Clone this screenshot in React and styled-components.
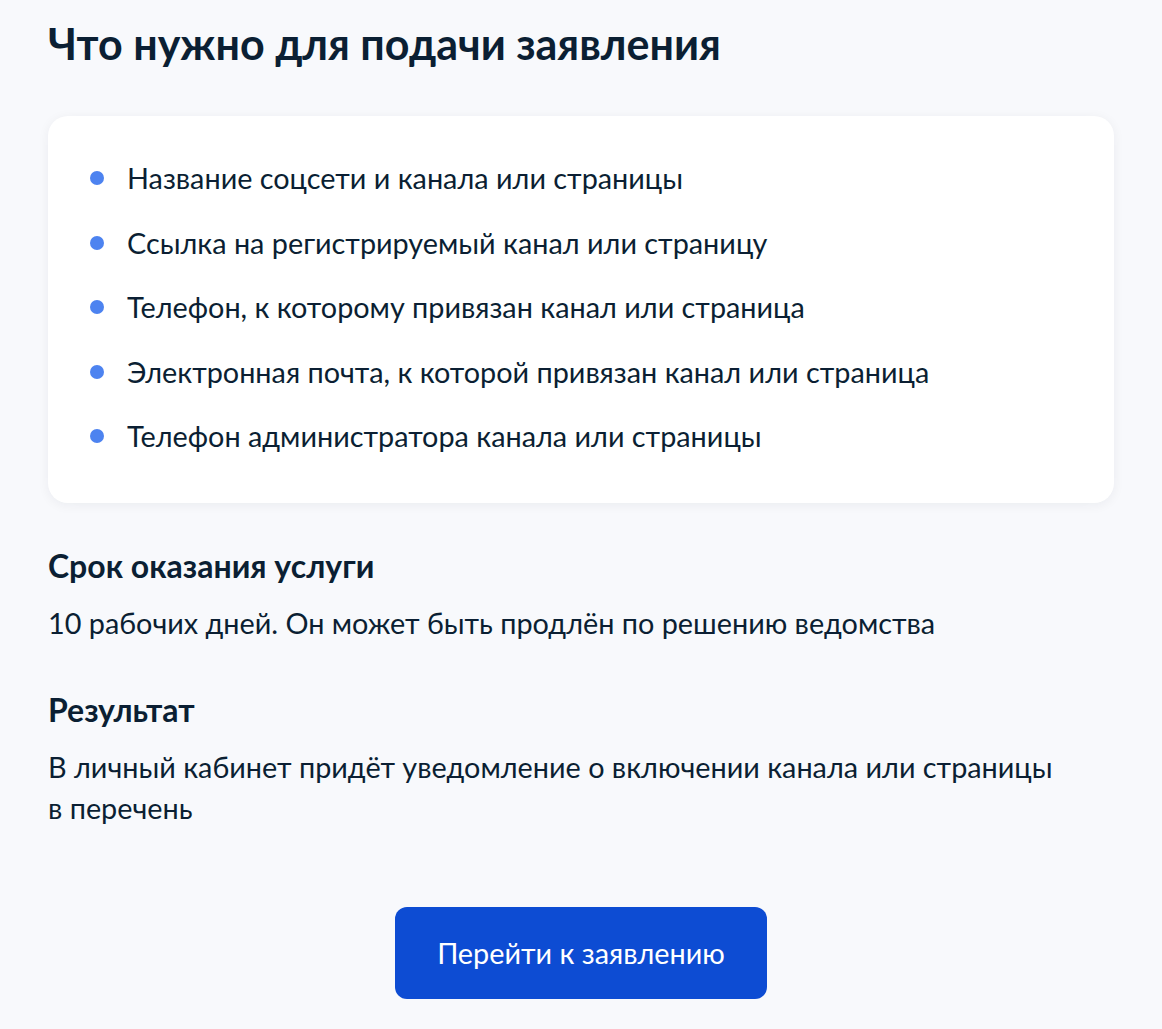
import React from 'react'
import styled, { createGlobalStyle } from 'styled-components'

const GlobalStyle = createGlobalStyle`
    body {
        margin: 0;
        background: #f8f9fc;
        font-family: Lato, "Noto Sans", sans-serif;
        color: #0b1f33;
    }
`

const items = [
    'Название соцсети и канала или страницы',
    'Ссылка на регистрируемый канал или страницу',
    'Телефон, к которому привязан канал или страница',
    'Электронная почта, к которой привязан канал или страница',
    'Телефон администратора канала или страницы',
]

const App = () => {
    return (
        <Page>
            <GlobalStyle />
            <Title>Что нужно для подачи заявления</Title>

            <Card>
                <List>
                    {items.map((item) => (
                        <Item key={item}>{item}</Item>
                    ))}
                </List>
            </Card>

            <Section>
                <SectionTitle>Срок оказания услуги</SectionTitle>
                <Text>10 рабочих дней. Он может быть продлён по решению ведомства</Text>
            </Section>

            <Section>
                <SectionTitle>Результат</SectionTitle>
                <Text>
                    В личный кабинет придёт уведомление о включении канала или страницы
                    <br />в перечень
                </Text>
            </Section>

            <ButtonRow>
                <Button>Перейти к заявлению</Button>
            </ButtonRow>
        </Page>
    )
}

export default App

const Page = styled.div`
    padding: 18px 48px 30px 48px;
    max-width: 1066px;
`

const Title = styled.h2`
    font-size: 43px;
    line-height: 52px;
    font-weight: 700;
    margin: 0 0 46px 0;
`

const Card = styled.div`
    background: #ffffff;
    border-radius: 20px;
    box-shadow: 0 2px 12px rgba(11, 31, 51, 0.06);
    padding: 42px 40px 47px 40px;
    margin-bottom: 43px;
`

const List = styled.ul`
    list-style: none;
    margin: 0;
    padding: 0;
    display: flex;
    flex-direction: column;
    gap: 24.5px;
`

const Item = styled.li`
    position: relative;
    padding-left: 39px;
    font-size: 28.8px;
    line-height: 40px;

    &::before {
        content: '';
        position: absolute;
        left: 2px;
        top: 13px;
        width: 14px;
        height: 14px;
        border-radius: 50%;
        background: #4d83f0;
    }
`

const Section = styled.div`
    margin-bottom: 46px;
`

const SectionTitle = styled.h3`
    font-size: 32px;
    line-height: 40px;
    font-weight: 700;
    margin: 0 0 17px 0;
`

const Text = styled.p`
    font-size: 28.8px;
    line-height: 41px;
    margin: 0;
`

const ButtonRow = styled.div`
    display: flex;
    justify-content: center;
    padding-top: 32px;
`

const Button = styled.button`
    width: 372px;
    height: 92px;
    border: none;
    border-radius: 12px;
    background: #0d4cd3;
    color: #ffffff;
    font-family: Lato, sans-serif;
    font-size: 28.8px;
    cursor: pointer;
`
